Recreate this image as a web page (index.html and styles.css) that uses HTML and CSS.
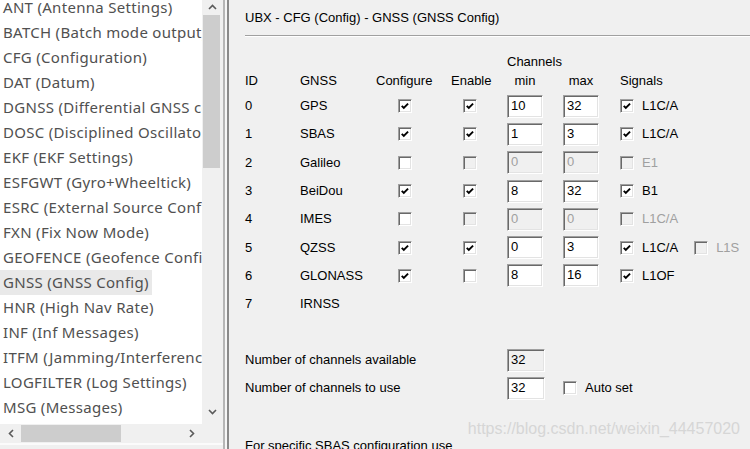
FILE: index.html
```html
<!DOCTYPE html>
<html>
<head>
<meta charset="utf-8">
<title>UBX - CFG - GNSS</title>
<link rel="stylesheet" href="styles.css">
</head>
<body>
<div class="app">
  <div class="tree">
    <div class="list">
      <div class="items">
        <div class="item"><span>ANT (Antenna Settings)</span></div>
        <div class="item"><span>BATCH (Batch mode output)</span></div>
        <div class="item"><span>CFG (Configuration)</span></div>
        <div class="item"><span>DAT (Datum)</span></div>
        <div class="item"><span>DGNSS (Differential GNSS configuration)</span></div>
        <div class="item"><span>DOSC (Disciplined Oscillator)</span></div>
        <div class="item"><span>EKF (EKF Settings)</span></div>
        <div class="item"><span>ESFGWT (Gyro+Wheeltick)</span></div>
        <div class="item"><span>ESRC (External Source Config)</span></div>
        <div class="item"><span>FXN (Fix Now Mode)</span></div>
        <div class="item"><span>GEOFENCE (Geofence Config)</span></div>
        <div class="item sel"><span>GNSS (GNSS Config)</span></div>
        <div class="item"><span>HNR (High Nav Rate)</span></div>
        <div class="item"><span>INF (Inf Messages)</span></div>
        <div class="item"><span>ITFM (Jamming/Interference Monitor)</span></div>
        <div class="item"><span>LOGFILTER (Log Settings)</span></div>
        <div class="item"><span>MSG (Messages)</span></div>
        <div class="item"><span>NAV5 (Navigation 5)</span></div>
      </div>
    </div>
    <div class="vscroll">
      <div class="varrow up"><svg width="9" height="6" viewBox="0 0 9 6"><polyline points="1,5 4.5,1.5 8,5" fill="none" stroke="#5a5a5a" stroke-width="1.6"/></svg></div>
      <div class="vthumb"></div>
      <div class="vspace"></div>
      <div class="varrow down"><svg width="9" height="6" viewBox="0 0 9 6"><polyline points="1,1 4.5,4.5 8,1" fill="none" stroke="#5a5a5a" stroke-width="1.6"/></svg></div>
    </div>
    <div class="hscroll">
      <div class="harrow"><svg width="6" height="9" viewBox="0 0 6 9"><polyline points="5,1 1.5,4.5 5,8" fill="none" stroke="#5a5a5a" stroke-width="1.6"/></svg></div>
      <div class="hthumb"></div>
      <div class="hspace"></div>
      <div class="harrow"><svg width="6" height="9" viewBox="0 0 6 9"><polyline points="1,1 4.5,4.5 1,8" fill="none" stroke="#5a5a5a" stroke-width="1.6"/></svg></div>
    </div>
    <div class="corner"></div>
    <div class="tree-foot"></div>
  </div>

  <div class="splitter"></div>

  <div class="panel">
    <div class="title">UBX - CFG (Config) - GNSS (GNSS Config)</div>
    <div class="sep"></div>

    <div class="table">
      <div></div><div></div><div></div><div></div>
      <div class="cell chan">Channels</div>
      <div></div>

      <div class="cell">ID</div>
      <div class="cell">GNSS</div>
      <div class="cell">Configure</div>
      <div class="cell">Enable</div>
      <div class="cell hc">min</div>
      <div class="cell hc">max</div>
      <div class="cell">Signals</div>

      <div class="cell">0</div>
      <div class="cell">GPS</div>
      <div class="cell conf"><span class="cb"><svg viewBox="0 0 14 14"><polyline points="3.2,6.8 5.6,9.3 10.6,4.2" fill="none" stroke="#000" stroke-width="2.2"/></svg></span></div>
      <div class="cell en"><span class="cb"><svg viewBox="0 0 14 14"><polyline points="3.2,6.8 5.6,9.3 10.6,4.2" fill="none" stroke="#000" stroke-width="2.2"/></svg></span></div>
      <div class="cell"><span class="field">10</span></div>
      <div class="cell"><span class="field">32</span></div>
      <div class="cell sig"><span class="cb"><svg viewBox="0 0 14 14"><polyline points="3.2,6.8 5.6,9.3 10.6,4.2" fill="none" stroke="#000" stroke-width="2.2"/></svg></span><span class="lbl">L1C/A</span></div>

      <div class="cell">1</div>
      <div class="cell">SBAS</div>
      <div class="cell conf"><span class="cb"><svg viewBox="0 0 14 14"><polyline points="3.2,6.8 5.6,9.3 10.6,4.2" fill="none" stroke="#000" stroke-width="2.2"/></svg></span></div>
      <div class="cell en"><span class="cb"><svg viewBox="0 0 14 14"><polyline points="3.2,6.8 5.6,9.3 10.6,4.2" fill="none" stroke="#000" stroke-width="2.2"/></svg></span></div>
      <div class="cell"><span class="field">1</span></div>
      <div class="cell"><span class="field">3</span></div>
      <div class="cell sig"><span class="cb"><svg viewBox="0 0 14 14"><polyline points="3.2,6.8 5.6,9.3 10.6,4.2" fill="none" stroke="#000" stroke-width="2.2"/></svg></span><span class="lbl">L1C/A</span></div>

      <div class="cell">2</div>
      <div class="cell">Galileo</div>
      <div class="cell conf"><span class="cb"></span></div>
      <div class="cell en"><span class="cb off"></span></div>
      <div class="cell"><span class="field off">0</span></div>
      <div class="cell"><span class="field off">0</span></div>
      <div class="cell sig"><span class="cb off"></span><span class="lbl off">E1</span></div>

      <div class="cell">3</div>
      <div class="cell">BeiDou</div>
      <div class="cell conf"><span class="cb"><svg viewBox="0 0 14 14"><polyline points="3.2,6.8 5.6,9.3 10.6,4.2" fill="none" stroke="#000" stroke-width="2.2"/></svg></span></div>
      <div class="cell en"><span class="cb"><svg viewBox="0 0 14 14"><polyline points="3.2,6.8 5.6,9.3 10.6,4.2" fill="none" stroke="#000" stroke-width="2.2"/></svg></span></div>
      <div class="cell"><span class="field">8</span></div>
      <div class="cell"><span class="field">32</span></div>
      <div class="cell sig"><span class="cb"><svg viewBox="0 0 14 14"><polyline points="3.2,6.8 5.6,9.3 10.6,4.2" fill="none" stroke="#000" stroke-width="2.2"/></svg></span><span class="lbl">B1</span></div>

      <div class="cell">4</div>
      <div class="cell">IMES</div>
      <div class="cell conf"><span class="cb"></span></div>
      <div class="cell en"><span class="cb off"></span></div>
      <div class="cell"><span class="field off">0</span></div>
      <div class="cell"><span class="field off">0</span></div>
      <div class="cell sig"><span class="cb off"></span><span class="lbl off">L1C/A</span></div>

      <div class="cell">5</div>
      <div class="cell">QZSS</div>
      <div class="cell conf"><span class="cb"><svg viewBox="0 0 14 14"><polyline points="3.2,6.8 5.6,9.3 10.6,4.2" fill="none" stroke="#000" stroke-width="2.2"/></svg></span></div>
      <div class="cell en"><span class="cb"><svg viewBox="0 0 14 14"><polyline points="3.2,6.8 5.6,9.3 10.6,4.2" fill="none" stroke="#000" stroke-width="2.2"/></svg></span></div>
      <div class="cell"><span class="field">0</span></div>
      <div class="cell"><span class="field">3</span></div>
      <div class="cell sig"><span class="cb"><svg viewBox="0 0 14 14"><polyline points="3.2,6.8 5.6,9.3 10.6,4.2" fill="none" stroke="#000" stroke-width="2.2"/></svg></span><span class="lbl">L1C/A</span><span class="cb off second"></span><span class="lbl off">L1S</span></div>

      <div class="cell">6</div>
      <div class="cell">GLONASS</div>
      <div class="cell conf"><span class="cb"><svg viewBox="0 0 14 14"><polyline points="3.2,6.8 5.6,9.3 10.6,4.2" fill="none" stroke="#000" stroke-width="2.2"/></svg></span></div>
      <div class="cell en"><span class="cb"></span></div>
      <div class="cell"><span class="field">8</span></div>
      <div class="cell"><span class="field">16</span></div>
      <div class="cell sig"><span class="cb"><svg viewBox="0 0 14 14"><polyline points="3.2,6.8 5.6,9.3 10.6,4.2" fill="none" stroke="#000" stroke-width="2.2"/></svg></span><span class="lbl">L1OF</span></div>

      <div class="cell">7</div>
      <div class="cell">IRNSS</div>
      <div></div><div></div><div></div><div></div><div></div>
    </div>

    <div class="totals">
      <div class="cell">Number of channels available</div>
      <div class="cell"><span class="field wide off dark">32</span></div>
      <div></div>
      <div class="cell">Number of channels to use</div>
      <div class="cell"><span class="field wide">32</span></div>
      <div class="cell sig"><span class="cb"></span><span class="lbl auto">Auto set</span></div>
    </div>

    <div class="note">For specific SBAS configuration use</div>

    <div class="watermark">https://blog.csdn.net/weixin_44457020</div>
  </div>
</div>
</body>
</html>
```

FILE: styles.css
```css
* { box-sizing: border-box; }
html, body { margin: 0; padding: 0; }
body {
  width: 750px;
  height: 449px;
  overflow: hidden;
  background: #f0f0f0;
  font-family: "Liberation Sans", Arial, sans-serif;
}
.app {
  display: flex;
  width: 750px;
  height: 449px;
}

/* ---------- left tree list ---------- */
.tree {
  flex: none;
  width: 223px;
  display: grid;
  grid-template-columns: 202px 21px;
  grid-template-rows: 424px 19px 6px;
}
.list {
  background: #fff;
  overflow: hidden;
  white-space: nowrap;
  font-family: "Noto Sans", "Open Sans", sans-serif;
  font-size: 15px;
  letter-spacing: 0.3px;
  color: #505050;
}
.items { margin-top: -5px; }
.item {
  height: 25px;
  line-height: 25px;
}
.item span {
  display: inline-block;
  height: 25px;
  padding: 0 3px;
}
.item.sel span { background: #e9e9e9; }

.vscroll {
  display: flex;
  flex-direction: column;
  background: #f0f0f0;
}
.varrow {
  height: 13px;
  display: flex;
  align-items: center;
  justify-content: center;
}
.varrow.down {
  height: 17px;
  margin-bottom: 4px;
}
.vthumb {
  height: 153px;
  margin: 2px 3px 0 1px;
  background: #cdcdcd;
}
.vspace { flex: 1; }

.hscroll {
  display: flex;
  background: #f0f0f0;
}
.harrow {
  width: 21px;
  display: flex;
  align-items: center;
  justify-content: center;
}
.hthumb {
  width: 100px;
  margin: 1px 0;
  background: #cdcdcd;
}
.hspace { flex: 1; }
.corner { background: #f0f0f0; }
.tree-foot {
  grid-column: 1 / span 2;
  background: #f0f0f0;
  border-top: 2px solid #fbfbfb;
}

/* ---------- splitter ---------- */
.splitter {
  flex: none;
  width: 6px;
  margin-right: 1px;
  border-left: 2px solid #b6b6b6;
  border-right: 2px solid #8a8a8a;
  background: #f6f6f6;
}

/* ---------- right panel ---------- */
.panel {
  flex: 1;
  position: relative;
  overflow: hidden;
  padding-left: 15px;
  font-size: 13px;
  color: #000;
  background: #f0f0f0;
}
.title {
  padding-top: 10px;
  line-height: 16px;
}
.sep {
  margin-top: 9px;
  height: 2px;
  border-top: 1px solid #a0a0a0;
  border-bottom: 1px solid #ffffff;
}

.table {
  margin-top: 17px;
  display: grid;
  grid-template-columns: 55px 76px 75px 56px 56px 57px auto;
  grid-template-rows: 16px 22px repeat(8, 28.3px);
}
.cell {
  display: flex;
  align-items: center;
  line-height: 16px;
  white-space: nowrap;
}
.chan { grid-column: span 2; }
.hc {
  width: 36px;
  justify-content: center;
}
.conf { padding-left: 22px; }
.en { padding-left: 12px; }

.cb {
  flex: none;
  width: 14px;
  height: 14px;
  background: #fff;
  border: 1px solid;
  border-color: #a0a0a0 #ffffff #ffffff #a0a0a0;
  box-shadow: inset 1px 1px 0 #696969, inset -1px -1px 0 #e3e3e3;
  display: flex;
}
.cb svg {
  width: 12px;
  height: 12px;
}
.cb.off { background: #f0f0f0; }
.cb.second { margin-left: 16px; }

.lbl { margin-left: 8px; }
.lbl.off { color: #a0a0a0; }
.lbl.auto { margin-left: 8px; }

.field {
  width: 36px;
  height: 23px;
  padding-left: 3px;
  line-height: 19px;
  background: #fff;
  border: 1px solid;
  border-color: #a0a0a0 #ffffff #ffffff #a0a0a0;
  box-shadow: inset 1px 1px 0 #696969, inset -1px -1px 0 #e3e3e3;
}
.field.off {
  background: #f0f0f0;
  color: #a0a0a0;
}
.field.off.dark { color: #000; }
.field.wide { width: 38px; }

.totals {
  margin-top: 28px;
  display: grid;
  grid-template-columns: 262px 56px auto;
  grid-template-rows: 28px 28px;
}

.note {
  margin-top: 36px;
  line-height: 16px;
  white-space: nowrap;
}

.watermark {
  position: absolute;
  right: 10px;
  top: 420px;
  font-family: "Liberation Sans", Arial, sans-serif;
  font-size: 16px;
  line-height: 18px;
  color: #d6d6d6;
  white-space: nowrap;
}
```
